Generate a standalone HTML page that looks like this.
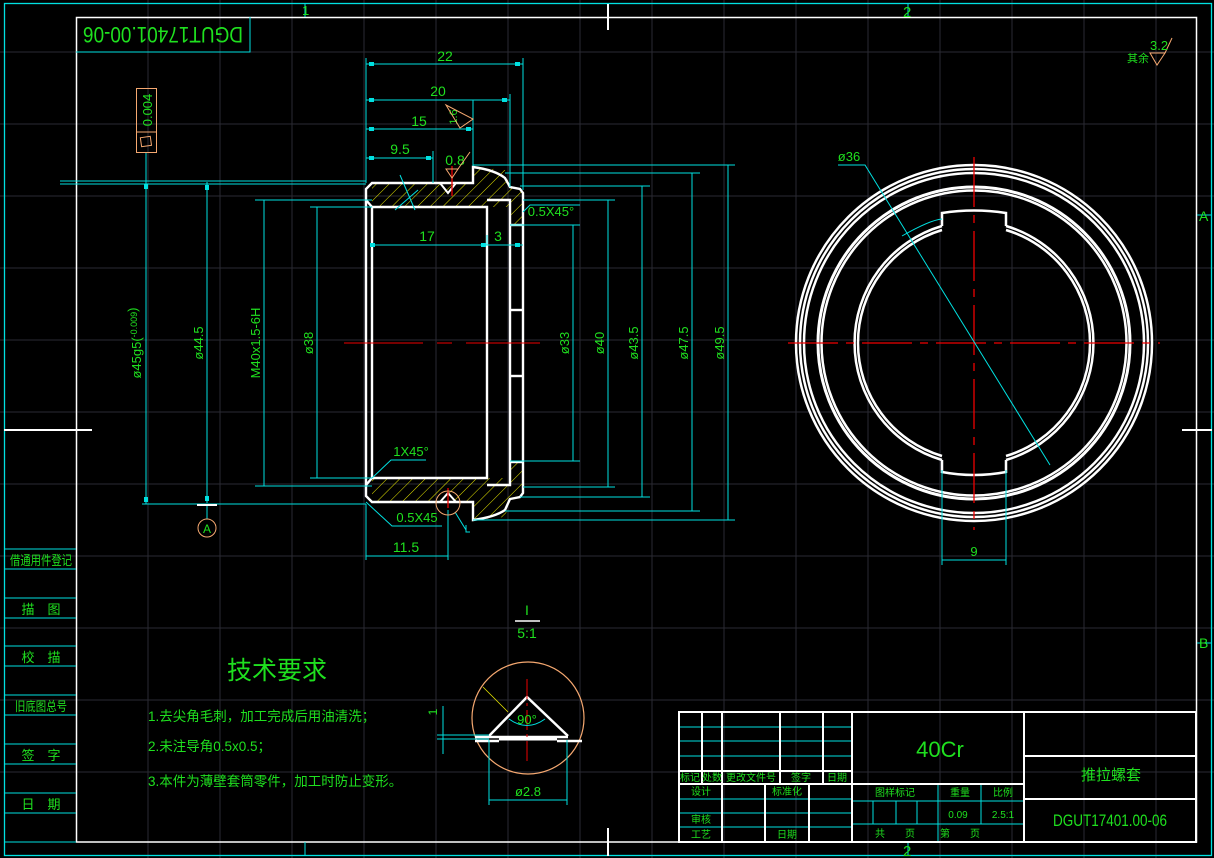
<!DOCTYPE html>
<html><head><meta charset="utf-8"><style>
html,body{margin:0;padding:0;background:#000;}
svg{display:block}
text{font-family:"Liberation Sans","Noto Sans CJK SC",sans-serif;fill:#1fe01f;}
</style></head><body>
<svg width="1214" height="858" viewBox="0 0 1214 858" xmlns="http://www.w3.org/2000/svg">
<defs>
<pattern id="h" width="9" height="9" patternUnits="userSpaceOnUse" patternTransform="rotate(45)">
<line x1="0" y1="0" x2="0" y2="9" stroke="#e8e800" stroke-width="1"/>
</pattern>
</defs>
<rect width="1214" height="858" fill="#000"/>
<g stroke="#2a2a33" stroke-width="1">
<line x1="148" y1="0" x2="148" y2="858"/><line x1="220" y1="0" x2="220" y2="858"/><line x1="292" y1="0" x2="292" y2="858"/><line x1="364" y1="0" x2="364" y2="858"/><line x1="436" y1="0" x2="436" y2="858"/><line x1="508" y1="0" x2="508" y2="858"/><line x1="580" y1="0" x2="580" y2="858"/><line x1="652" y1="0" x2="652" y2="858"/><line x1="724" y1="0" x2="724" y2="858"/><line x1="796" y1="0" x2="796" y2="858"/><line x1="868" y1="0" x2="868" y2="858"/><line x1="940" y1="0" x2="940" y2="858"/><line x1="1012" y1="0" x2="1012" y2="858"/><line x1="1084" y1="0" x2="1084" y2="858"/><line x1="1156" y1="0" x2="1156" y2="858"/>
<line x1="0" y1="52" x2="1214" y2="52"/><line x1="0" y1="124" x2="1214" y2="124"/><line x1="0" y1="196" x2="1214" y2="196"/><line x1="0" y1="268" x2="1214" y2="268"/><line x1="0" y1="340" x2="1214" y2="340"/><line x1="0" y1="412" x2="1214" y2="412"/><line x1="0" y1="484" x2="1214" y2="484"/><line x1="0" y1="556" x2="1214" y2="556"/><line x1="0" y1="628" x2="1214" y2="628"/><line x1="0" y1="700" x2="1214" y2="700"/><line x1="0" y1="772" x2="1214" y2="772"/>
</g>
<rect x="4.5" y="3.5" width="1207" height="852" fill="none" stroke="#00e0e0" stroke-width="1.3"/>
<rect x="76.5" y="17.5" width="1120" height="824.5" fill="none" stroke="#fff" stroke-width="1.5"/>
<g stroke="#fff" stroke-width="2">
<line x1="608" y1="4" x2="608" y2="30"/><line x1="608" y1="828" x2="608" y2="856"/>
<line x1="4" y1="430" x2="92" y2="430"/><line x1="1182" y1="430" x2="1212" y2="430"/>
</g>
<g stroke="#00e0e0" stroke-width="1"><line x1="305" y1="4" x2="305" y2="17"/><line x1="908" y1="4" x2="908" y2="17"/><line x1="305" y1="842" x2="305" y2="856"/><line x1="908" y1="842" x2="908" y2="856"/><line x1="1197" y1="215" x2="1212" y2="215"/><line x1="1197" y1="643" x2="1212" y2="643"/></g>
<text x="302" y="15" font-size="13">1</text><text x="903" y="17" font-size="15">2</text>
<text x="1199" y="221" font-size="14">A</text><text x="1199" y="648" font-size="14">B</text>
<text x="903" y="856" font-size="15">2</text>
<g stroke="#00e0e0" stroke-width="1">
<line x1="4" y1="549" x2="76" y2="549"/><line x1="4" y1="569" x2="76" y2="569"/><line x1="4" y1="598" x2="76" y2="598"/><line x1="4" y1="618" x2="76" y2="618"/><line x1="4" y1="646" x2="76" y2="646"/><line x1="4" y1="666" x2="76" y2="666"/><line x1="4" y1="695" x2="76" y2="695"/><line x1="4" y1="715" x2="76" y2="715"/><line x1="4" y1="744" x2="76" y2="744"/><line x1="4" y1="764" x2="76" y2="764"/><line x1="4" y1="793" x2="76" y2="793"/><line x1="4" y1="813" x2="76" y2="813"/><line x1="4" y1="842" x2="76" y2="842"/>
</g>
<g font-size="13" text-anchor="middle">
<text x="41" y="565" textLength="62" lengthAdjust="spacingAndGlyphs">借通用件登记</text>
<text x="41" y="614">描　图</text><text x="41" y="662">校　描</text>
<text x="41" y="711" textLength="52" lengthAdjust="spacingAndGlyphs">旧底图总号</text>
<text x="41" y="760">签　字</text><text x="41" y="809">日　期</text>
</g>
<polyline points="76,52 250,52 250,17" fill="none" stroke="#00e0e0" stroke-width="1"/>
<text transform="translate(163,35) rotate(180)" x="0" y="8" font-size="22" text-anchor="middle" textLength="160" lengthAdjust="spacingAndGlyphs">DGUT17401.00-06</text>
<rect x="136.5" y="88.5" width="20" height="64" fill="none" stroke="#f5a870" stroke-width="1"/>
<line x1="136" y1="132" x2="157" y2="132" stroke="#f5a870"/>
<text transform="translate(152,110) rotate(-90)" x="0" y="0" font-size="13" text-anchor="middle">0.004</text>
<rect x="141" y="137" width="10" height="9" fill="none" stroke="#f5a870" transform="rotate(-8 146 142)"/>
<line x1="146" y1="153" x2="146" y2="182" stroke="#00e0e0"/>
<g fill="url(#h)" stroke="none">
<path d="M372,183 L473,183 L473,167 L505,170 L510,187 L523,192 L523,225 L510,225 L510,207 L372,207 Z"/>
<path d="M372,478 L510,478 L510,462 L523,462 L523,495 L510,500 L505,517 L473,520 L473,502 L372,502 Z"/>
</g>
<g fill="none" stroke="#fff" stroke-width="2.4">
<path d="M372,183 L473,183 L473,167 Q495,170 505,178 L510,187 L520,189 L523,193 L523,493 L520,497 L510,499 L505,510 Q495,517 473,520 L473,502 L372,502 L366,496 L366,189 Z"/>
<path d="M372,207 L487,207 L487,478 L372,478"/>
<line x1="372" y1="207" x2="372" y2="478"/>
<line x1="366" y1="200" x2="372" y2="207"/><line x1="366" y1="485" x2="372" y2="478"/>
<path d="M487,200 L510,200 L510,485 L487,485"/>
<line x1="510" y1="225" x2="523" y2="225"/><line x1="510" y1="462" x2="523" y2="462"/>
<line x1="510" y1="310" x2="523" y2="310"/><line x1="510" y1="376" x2="523" y2="376"/>
<path d="M440,183 L448,193 L456,183" stroke-width="2"/>
<path d="M440,502 L448,493 L456,502" stroke-width="2"/>
</g>
<g stroke="#e00" stroke-width="1.3">
<line x1="452" y1="166" x2="452" y2="196"/><line x1="448" y1="488" x2="448" y2="508"/>
<line x1="344" y1="343" x2="423" y2="343" stroke-width="1"/><line x1="437" y1="343" x2="452" y2="343" stroke-width="1"/><line x1="466" y1="343" x2="540" y2="343" stroke-width="1"/>
</g>
<g stroke="#00e0e0" stroke-width="1" fill="none">
<line x1="366" y1="58" x2="366" y2="183"/><line x1="523" y1="58" x2="523" y2="190"/>
<line x1="366" y1="64" x2="523" y2="64"/>
<line x1="510" y1="94" x2="510" y2="187"/><line x1="366" y1="100" x2="510" y2="100"/>
<line x1="473" y1="100" x2="473" y2="166"/><line x1="366" y1="129" x2="473" y2="129"/>
<line x1="433" y1="151" x2="433" y2="183"/><line x1="366" y1="158" x2="433" y2="158"/>
<line x1="372" y1="245" x2="523" y2="245"/><line x1="487" y1="235" x2="487" y2="245"/>
<line x1="60" y1="181" x2="366" y2="181"/><line x1="60" y1="184" x2="366" y2="184"/>
<line x1="142" y1="504" x2="366" y2="504"/>
<line x1="146" y1="182" x2="146" y2="504"/>
<line x1="207" y1="182" x2="207" y2="503"/>
<line x1="264" y1="200" x2="264" y2="486"/><line x1="255" y1="200" x2="372" y2="200"/><line x1="255" y1="486" x2="372" y2="486"/>
<line x1="317" y1="207" x2="317" y2="478"/><line x1="310" y1="207" x2="372" y2="207"/><line x1="310" y1="478" x2="372" y2="478"/>
<line x1="510" y1="225" x2="580" y2="225"/><line x1="510" y1="461" x2="580" y2="461"/><line x1="573" y1="225" x2="573" y2="461"/>
<line x1="523" y1="200" x2="615" y2="200"/><line x1="523" y1="487" x2="615" y2="487"/><line x1="608" y1="200" x2="608" y2="487"/>
<line x1="520" y1="186" x2="650" y2="186"/><line x1="520" y1="497" x2="650" y2="497"/><line x1="642" y1="186" x2="642" y2="497"/>
<line x1="505" y1="173" x2="700" y2="173"/><line x1="505" y1="511" x2="700" y2="511"/><line x1="692" y1="173" x2="692" y2="511"/>
<line x1="473" y1="165" x2="735" y2="165"/><line x1="473" y1="520" x2="735" y2="520"/><line x1="728" y1="165" x2="728" y2="520"/>
<line x1="366" y1="504" x2="366" y2="560"/><line x1="448" y1="510" x2="448" y2="560"/><line x1="366" y1="556" x2="448" y2="556"/>
<path d="M523,212 L530,205 L580,205"/>
<path d="M372,478 L391,460 L426,460"/>
<path d="M366,502 L392,526 L442,526"/>
<path d="M455,512 L466,530"/>
<path d="M400,175 L415,210 M395,210 L418,190"/>
<line x1="207" y1="505" x2="207" y2="519"/>
</g>
<g fill="#00e0e0">
<rect x="369" y="62" width="5" height="4"/><rect x="515" y="62" width="5" height="4"/>
<rect x="369" y="98" width="5" height="4"/><rect x="502" y="98" width="5" height="4"/>
<rect x="369" y="127" width="5" height="4"/><rect x="466" y="127" width="5" height="4"/>
<rect x="369" y="156" width="5" height="4"/><rect x="426" y="156" width="5" height="4"/>
<rect x="370" y="243" width="5" height="4"/><rect x="481" y="243" width="5" height="4"/><rect x="515" y="243" width="5" height="4"/>
<rect x="144" y="184" width="4" height="5"/><rect x="144" y="497" width="4" height="5"/>
<rect x="205" y="185" width="4" height="5"/><rect x="205" y="496" width="4" height="5"/>
</g>
<rect x="197" y="504" width="20" height="2" fill="#fff"/>
<circle cx="207" cy="528" r="9" fill="none" stroke="#f5a870"/>
<text x="207" y="533" font-size="12" text-anchor="middle">A</text>
<circle cx="448" cy="503" r="12" fill="none" stroke="#f5a870"/>
<path d="M466,525 L466,532 L470,532" stroke="#00e0e0" fill="none"/>
<g font-size="14" text-anchor="middle">
<text x="445" y="61">22</text><text x="438" y="96">20</text><text x="419" y="126">15</text><text x="400" y="154">9.5</text>
<text x="427" y="241">17</text><text x="498" y="241">3</text><text x="455" y="165">0.8</text>
<text x="551" y="216" font-size="13">0.5X45°</text><text x="411" y="456" font-size="13">1X45°</text><text x="417" y="522" font-size="13">0.5X45</text>
<text x="406" y="552">11.5</text>
</g>
<g font-size="13" text-anchor="middle">
<text transform="translate(141,343) rotate(-90)">ø45g5(<tspan font-size="9" dy="-4">-0.009</tspan>)</text>
<text transform="translate(203,343) rotate(-90)">ø44.5</text>
<text transform="translate(260,343) rotate(-90)">M40x1.5-6H</text>
<text transform="translate(313,343) rotate(-90)">ø38</text>
<text transform="translate(569,343) rotate(-90)">ø33</text>
<text transform="translate(604,343) rotate(-90)">ø40</text>
<text transform="translate(638,343) rotate(-90)">ø43.5</text>
<text transform="translate(688,343) rotate(-90)">ø47.5</text>
<text transform="translate(724,343) rotate(-90)">ø49.5</text>
<text transform="translate(457,117) rotate(-90)" font-size="11">1.6</text>
</g>
<g stroke="#f5a870" fill="none" stroke-width="1">
<path d="M446,105 L473,119 L460,128 Z"/><path d="M446,169 L458,169 L452,178 Z"/><line x1="458" y1="169" x2="470" y2="152"/>
<path d="M1150,53 L1165,53 L1157,65 Z"/><line x1="1165" y1="53" x2="1172" y2="38"/>
</g>
<text x="1150" y="50" font-size="13">3.2</text>
<text x="1127" y="62" font-size="11">其余</text>
<g fill="none" stroke="#fff" stroke-width="2.5">
<circle cx="974" cy="343" r="178"/><circle cx="974" cy="343" r="174"/><circle cx="974" cy="343" r="170"/>
<circle cx="974" cy="343" r="156" stroke-width="3"/><circle cx="974" cy="343" r="152.5"/>
<path d="M1006,230 A118,118 0 0 1 1006,456"/><path d="M942,230 A118,118 0 0 0 942,456"/>
<path d="M1006,226 A122,122 0 0 1 1006,460"/><path d="M942,226 A122,122 0 0 0 942,460"/>
<path d="M1006,226 L1006,213 Q974,208 942,213 L942,226"/>
<path d="M942,460 L942,472 Q974,478 1006,472 L1006,460"/>
</g>
<g stroke="#e00" stroke-width="1.3" stroke-dasharray="50,8,8,8">
<line x1="974" y1="157" x2="974" y2="530"/><line x1="788" y1="343" x2="1160" y2="343"/>
</g>
<g stroke="#00e0e0" fill="none" stroke-width="1">
<polyline points="838,165 865,165 1050,465"/>
<path d="M902,236 Q930,220 942,219"/>
<line x1="942" y1="470" x2="942" y2="565"/><line x1="1006" y1="470" x2="1006" y2="565"/><line x1="942" y1="560" x2="1006" y2="560"/>
</g>
<text x="849" y="161" font-size="13" text-anchor="middle">ø36</text>
<text x="974" y="556" font-size="13" text-anchor="middle">9</text>
<text x="277" y="679" font-size="25" text-anchor="middle">技术要求</text>
<g font-size="13.5">
<text x="148" y="721">1.去尖角毛刺，加工完成后用油清洗；</text>
<text x="148" y="751">2.未注导角0.5x0.5；</text>
<text x="148" y="786">3.本件为薄壁套筒零件，加工时防止变形。</text>
</g>
<text x="527" y="615" font-size="14" text-anchor="middle">I</text>
<line x1="515" y1="621" x2="540" y2="621" stroke="#fff" stroke-width="1.5"/>
<text x="527" y="638" font-size="14" text-anchor="middle">5:1</text>
<circle cx="528" cy="718" r="56" fill="none" stroke="#f5a870" stroke-width="1.2"/>
<line x1="483" y1="687" x2="508" y2="712" stroke="#e8e800" stroke-width="0.8"/>
<g stroke="#fff" stroke-width="2.5" fill="none">
<polyline points="489,736 527,697 568,736"/>
<line x1="475" y1="737" x2="568" y2="737"/><line x1="475" y1="741" x2="499" y2="741"/><line x1="557" y1="741" x2="582" y2="741"/><line x1="499" y1="739" x2="557" y2="739" stroke-width="3"/>
</g>
<line x1="527" y1="679" x2="527" y2="762" stroke="#e00" stroke-width="1" stroke-dasharray="20,4,3,4"/>
<path d="M509,719 Q527,732 545,719" stroke="#00e0e0" fill="none"/>
<text x="527" y="724" font-size="13" text-anchor="middle">90°</text>
<g stroke="#00e0e0" fill="none">
<line x1="437" y1="735" x2="489" y2="735"/><line x1="437" y1="739" x2="489" y2="739"/>
<line x1="443" y1="706" x2="443" y2="754"/>
<line x1="489" y1="740" x2="489" y2="805"/><line x1="567" y1="740" x2="567" y2="805"/><line x1="489" y1="800" x2="567" y2="800"/>
</g>
<text transform="translate(437,712) rotate(-90)" font-size="12" text-anchor="middle">1</text>
<text x="528" y="796" font-size="13" text-anchor="middle">ø2.8</text>
<g stroke="#00e0e0" stroke-width="1">
<line x1="679" y1="727" x2="852" y2="727"/><line x1="679" y1="741" x2="852" y2="741"/><line x1="679" y1="756" x2="852" y2="756"/>
<line x1="679" y1="799" x2="852" y2="799"/><line x1="679" y1="813" x2="852" y2="813"/><line x1="679" y1="827" x2="852" y2="827"/>
<line x1="852" y1="801" x2="1024" y2="801"/><line x1="852" y1="824" x2="1024" y2="824"/>
<line x1="873" y1="801" x2="873" y2="824"/><line x1="896" y1="801" x2="896" y2="824"/><line x1="917" y1="801" x2="917" y2="824"/>
<line x1="938" y1="784" x2="938" y2="842"/><line x1="981" y1="784" x2="981" y2="824"/>
</g>
<g stroke="#fff" stroke-width="2" fill="none">
<rect x="679" y="712" width="517" height="130"/>
<line x1="679" y1="771" x2="852" y2="771"/><line x1="679" y1="784" x2="1024" y2="784"/>
<line x1="702" y1="712" x2="702" y2="784"/><line x1="722" y1="712" x2="722" y2="842"/><line x1="780" y1="712" x2="780" y2="784"/><line x1="823" y1="712" x2="823" y2="784"/>
<line x1="765" y1="784" x2="765" y2="842"/><line x1="809" y1="784" x2="809" y2="842"/>
<line x1="852" y1="712" x2="852" y2="842"/><line x1="1024" y1="712" x2="1024" y2="842"/>
<line x1="1024" y1="756" x2="1196" y2="756"/><line x1="1024" y1="799" x2="1196" y2="799"/>
</g>
<g font-size="10" text-anchor="middle">
<text x="690" y="781">标记</text><text x="712" y="781">处数</text><text x="751" y="781">更改文件号</text><text x="801" y="781">签字</text><text x="837" y="781">日期</text>
<text x="701" y="795">设计</text><text x="787" y="795">标准化</text><text x="701" y="823">审核</text><text x="701" y="838">工艺</text><text x="787" y="838">日期</text>
<text x="895" y="796">图样标记</text><text x="960" y="796">重量</text><text x="1003" y="796">比例</text>
<text x="958" y="818">0.09</text><text x="1003" y="818">2.5:1</text>
<text x="895" y="837">共　　页</text><text x="960" y="837">第　　页</text>
</g>
<text x="940" y="757" font-size="22" text-anchor="middle">40Cr</text>
<text x="1111" y="780" font-size="15" text-anchor="middle">推拉螺套</text>
<text x="1110" y="826" font-size="17" text-anchor="middle" textLength="114" lengthAdjust="spacingAndGlyphs">DGUT17401.00-06</text>
</svg>
</body></html>
